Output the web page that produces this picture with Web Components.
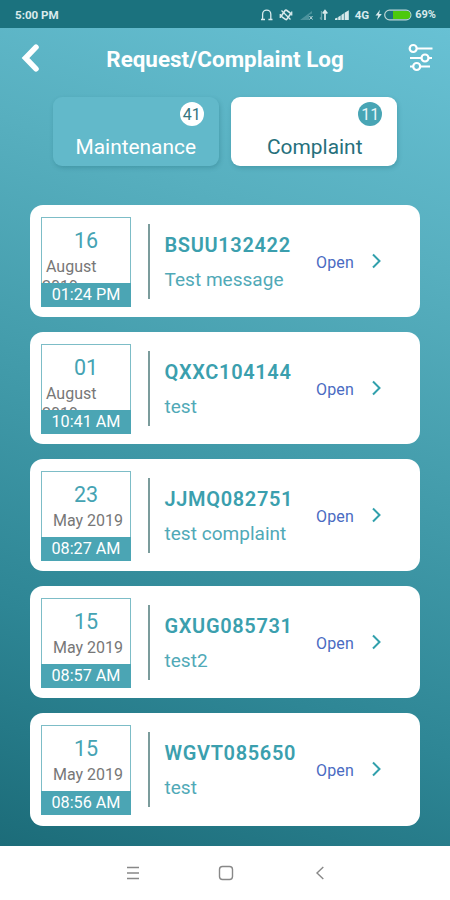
<!DOCTYPE html>
<html lang="en">
<head>
<meta charset="utf-8">
<title>Request/Complaint Log</title>
<style>
  body {
    margin: 0;
    font-family: Roboto, 'Liberation Sans', sans-serif;
  }
</style>
</head>
<body>
<log-screen></log-screen>

<script>
// Clones a template into an open shadow root
function attach(el, html) {
  const template = document.createElement('template');
  template.innerHTML = html;
  const shadow = el.attachShadow({ mode: 'open' });
  shadow.appendChild(template.content.cloneNode(true));
  return shadow;
}

class StatusBar extends HTMLElement {
  constructor() {
    super();
    attach(this, `
      <style>
        :host {
          display: flex;
          justify-content: space-between;
          align-items: center;
          box-sizing: border-box;
          height: 28px;
          padding: 1px 14px 0 15px;
          background: #1b727e;
          color: #d9eaec;
          font-size: 11.6px;
          font-weight: 700;
          line-height: 14px;
        }
        .icons {
          display: flex;
          align-items: center;
        }
        svg {
          display: block;
        }
        .net {
          margin: 0 6px 0 4px;
        }
        .level {
          margin-left: 3px;
          font-size: 11px;
        }
      </style>
      <span>5:00 PM</span>
      <div class="icons">
        <svg width="91" height="14" viewBox="0 0 91 14" fill="none" stroke="#d9eaec" stroke-width="1.3">
          <path d="M1 11.500h4M8.400 11.500H12.500M2.600 11.500V6.200a4.100 4.100 0 0 1 8.200 0V11.500"/>
          <rect x="22.800" y="2.800" width="6.400" height="8" rx="1" transform="rotate(35 26 6.800)" stroke-width="1.600"/>
          <path d="M21.500 2.500l9 9M20.300 6v4M31.700 3.500v4"/>
          <path d="M40 12l12-9v2.500l-3 1.500v5z" fill="#4a929c" stroke="none"/>
          <path d="M49.500 8l3 3.500M52.500 8l-3 3.500" stroke="#c4dde0" stroke-width="1"/>
          <path d="M61.500 3v9M60 9.500l1.500 2" stroke="#67a4ac"/>
          <path d="M65 12V3M62.800 5.500L65 2.700l2.300 2.800" stroke-width="1.700"/>
          <path d="M75 12v-1.500l2.500-1V12zM78.200 12V9l2.500-1.500V12zM81.400 12V7l2.500-1.700V12zM84.600 12V4.800l4.200-2.500V12z" fill="#d9eaec" stroke="none"/>
        </svg>
        <span class="net">4G</span>
        <svg width="37" height="12" viewBox="0 0 37 12">
          <path d="M5 .8L.5 6.600H3.200L2 11 6.800 4.900H4z" fill="#d9eaec"/>
          <rect x="9.700" y="1.200" width="26.200" height="9.600" rx="4.800" fill="#1b727e" stroke="#bcd5d5" stroke-width="1.200"/>
          <path d="M18 2.100H31.500a3.900 3.900 0 0 1 0 7.800H18z" fill="#4cc90c"/>
        </svg>
        <span class="level">69%</span>
      </div>
    `);
  }
}

class PageHeader extends HTMLElement {
  constructor() {
    super();
    attach(this, `
      <style>
        :host {
          display: flex;
          justify-content: space-between;
          align-items: center;
          box-sizing: border-box;
          height: 60px;
          padding: 0 17px 0 21px;
          color: #fff;
        }
        h1 {
          margin: 2px 0 0 1px;
          font-size: 22.4px;
          font-weight: 700;
          line-height: 28px;
        }
        svg {
          display: block;
        }
      </style>
      <svg width="20" height="30" viewBox="0 0 20 30" fill="none" stroke="#fff" stroke-width="5.500">
        <path d="M15 4.200L4.500 15 15 25.800" stroke-linecap="round" stroke-linejoin="miter"/>
      </svg>
      <h1><slot></slot></h1>
      <svg width="25" height="30" viewBox="0 0 25 30" fill="none" stroke="#fff" stroke-width="2.200">
        <path d="M9 5.500H24.500M2 15h11M20.500 15h3.500M2 23.500h3M12.500 23.500H22"/>
        <circle cx="5.200" cy="5.500" r="3.500"/>
        <circle cx="17" cy="15" r="3.500"/>
        <circle cx="8.700" cy="23.500" r="3.500"/>
      </svg>
    `);
  }
}

class LogTab extends HTMLElement {
  constructor() {
    super();
    const shadow = attach(this, `
      <style>
        :host {
          display: flex;
          flex-direction: column;
          box-sizing: border-box;
          width: 166px;
          height: 69px;
          padding: 5px 15px 0;
          border-radius: 9px;
          background: #62b9ca;
          color: #fff;
          box-shadow: 1px 2px 4px rgba(20, 90, 105, .25);
        }
        :host([active]) {
          background: #fff;
          color: #26707c;
        }
        .badge {
          align-self: flex-end;
          width: 24px;
          height: 24px;
          border-radius: 50%;
          background: #fff;
          color: #34757f;
          font-size: 16px;
          line-height: 25px;
          text-align: center;
        }
        :host([active]) .badge {
          background: #48a5b5;
          color: #e8f6f8;
        }
        .label {
          margin-top: 8px;
          font-size: 20.900px;
          line-height: 26px;
          text-align: center;
        }
        :host([active]) .label {
          padding-left: 1px;
        }
      </style>
      <span class="badge"></span>
      <span class="label"><slot></slot></span>
    `);
    this.$badge = shadow.querySelector('.badge');
  }

  connectedCallback() {
    this.$badge.textContent = this.getAttribute('count');
  }
}

class DateBox extends HTMLElement {
  constructor() {
    super();
    const shadow = attach(this, `
      <style>
        :host {
          display: flex;
          flex-direction: column;
          box-sizing: border-box;
          width: 90px;
          height: 90px;
          border: 1.500px solid #7dbdc7;
        }
        .date {
          display: flex;
          flex-direction: column;
          align-items: center;
          height: 65px;
          overflow: hidden;
        }
        .day {
          margin-top: 10px;
          color: #45a3b3;
          font-size: 21.500px;
          line-height: 26px;
        }
        .month {
          margin-top: 3px;
          color: #777;
          font-size: 16px;
          line-height: 20px;
          text-indent: 4px;
        }
        .time {
          flex: 1;
          margin: 0 -1px -1px;
          background: #4ba5b4;
          color: #fff;
          font-size: 16.200px;
          line-height: 24px;
          text-align: center;
        }
      </style>
      <div class="date">
        <span class="day"></span>
        <span class="month"></span>
      </div>
      <span class="time"></span>
    `);
    this.$day = shadow.querySelector('.day');
    this.$month = shadow.querySelector('.month');
    this.$time = shadow.querySelector('.time');
  }

  connectedCallback() {
    this.$day.textContent = this.getAttribute('day');
    this.$month.textContent = this.getAttribute('month');
    this.$time.textContent = this.getAttribute('time');
  }
}

class LogCard extends HTMLElement {
  constructor() {
    super();
    attach(this, `
      <style>
        :host {
          display: flex;
          align-items: center;
          box-sizing: border-box;
          height: 112.200px;
          padding: 1px 38px 0 11px;
          border-radius: 13px;
          background: #fff;
        }
        .line {
          width: 1.500px;
          height: 75px;
          margin: 0 15px 1px 17px;
          background: #7b9c9c;
        }
        .info {
          flex: 1;
          display: flex;
          flex-direction: column;
          gap: 11px;
          padding-top: 2px;
          color: #3b9fae;
          line-height: 24px;
          white-space: nowrap;
        }
        .code {
          font-size: 20px;
          font-weight: 600;
          letter-spacing: .65px;
        }
        .text {
          font-size: 19px;
          letter-spacing: .03px;
          color: #50a9b7;
        }
        .status {
          margin: 2px 17px 0 0;
          color: #4a6bc2;
          font-size: 16px;
          line-height: 20px;
          letter-spacing: .15px;
        }
        svg {
          display: block;
          margin-bottom: 1px;
        }
      </style>
      <slot name="date"></slot>
      <div class="line"></div>
      <div class="info">
        <span class="code"><slot name="code"></slot></span>
        <span class="text"><slot></slot></span>
      </div>
      <span class="status">Open</span>
      <svg width="11" height="16" viewBox="0 0 11 16" fill="none" stroke="#31a0ac" stroke-width="2">
        <path d="M2 1.500L8.500 8 2 14.500"/>
      </svg>
    `);
  }
}

class NavBar extends HTMLElement {
  constructor() {
    super();
    attach(this, `
      <style>
        :host {
          display: flex;
          align-items: center;
          justify-content: space-between;
          box-sizing: border-box;
          height: 54px;
          padding: 0 121px 0 125px;
          background: #fff;
        }
        svg {
          display: block;
        }
        svg:nth-of-type(2) {
          margin-right: 3px;
        }
      </style>
      <svg width="16" height="16" viewBox="0 0 16 16" fill="none" stroke="#888" stroke-width="1.400">
        <path d="M2 2.500h12M2 8h12M2 13.500h12"/>
      </svg>
      <svg width="16" height="16" viewBox="0 0 16 16" fill="none" stroke="#888" stroke-width="1.400">
        <rect x="1.500" y="1.500" width="13" height="13" rx="3"/>
      </svg>
      <svg width="16" height="16" viewBox="0 0 16 16" fill="none" stroke="#888" stroke-width="1.400">
        <path d="M10.300 2L4 8l6.300 6"/>
      </svg>
    `);
  }
}

class LogScreen extends HTMLElement {
  constructor() {
    super();
    const shadow = attach(this, `
      <style>
        :host {
          display: flex;
          flex-direction: column;
          width: 450px;
          height: 900px;
          overflow: hidden;
        }
        main {
          flex: 1;
          background: linear-gradient(199deg, #68c1d4 0%, #57afbf 25%, #429baa 50%, #2e8695 75%, #1c6c79 100%);
        }
        .tabs {
          display: flex;
          justify-content: center;
          gap: 12.500px;
          margin-top: 9px;
        }
        .list {
          display: flex;
          flex-direction: column;
          gap: 14.900px;
          padding: 39px 30px 0;
        }
      </style>
      <status-bar></status-bar>
      <main>
        <page-header>Request/Complaint Log</page-header>
        <div class="tabs">
          <log-tab count="41">Maintenance</log-tab>
          <log-tab count="11" active>Complaint</log-tab>
        </div>
        <div class="list"></div>
      </main>
      <nav-bar></nav-bar>
    `);
    this.$list = shadow.querySelector('.list');
  }

  connectedCallback() {
    this._render();
  }

  _render() {
    const logs = [
      ['16', 'August 2019', '01:24 PM', 'BSUU132422', 'Test message'],
      ['01', 'August 2019', '10:41 AM', 'QXXC104144', 'test'],
      ['23', 'May 2019', '08:27 AM', 'JJMQ082751', 'test complaint'],
      ['15', 'May 2019', '08:57 AM', 'GXUG085731', 'test2'],
      ['15', 'May 2019', '08:56 AM', 'WGVT085650', 'test'],
    ];
    this.$list.innerHTML = logs.map(([day, month, time, code, text]) => `
      <log-card>
        <date-box slot="date" day="${day}" month="${month}" time="${time}"></date-box>
        <span slot="code">${code}</span>${text}
      </log-card>
    `).join('');
  }
}

window.customElements.define('status-bar', StatusBar);
window.customElements.define('page-header', PageHeader);
window.customElements.define('log-tab', LogTab);
window.customElements.define('date-box', DateBox);
window.customElements.define('log-card', LogCard);
window.customElements.define('nav-bar', NavBar);
window.customElements.define('log-screen', LogScreen);
</script>
</body>
</html>
